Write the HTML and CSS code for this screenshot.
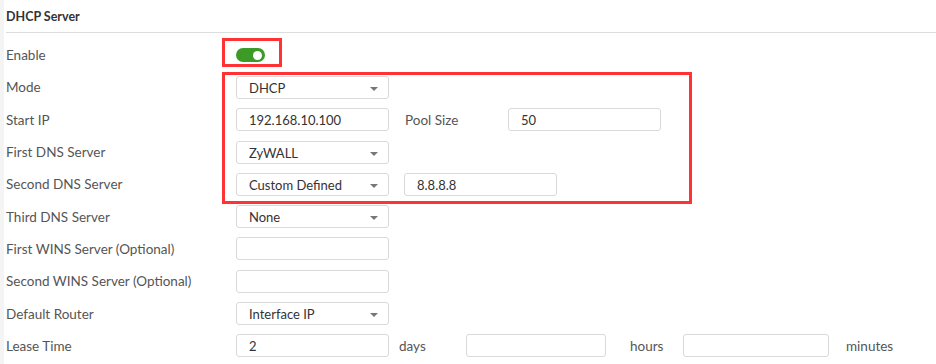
FILE: index.html
```html
<!DOCTYPE html>
<html lang="en">

<head>
    <meta charset="UTF-8">
    <title>DHCP Server</title>
    <link rel="stylesheet" href="styles.css">
</head>

<body>
    <div class="page">
        <div class="title">DHCP Server</div>
        <div class="form">
            <div class="row">
                <div class="label">Enable</div>
                <div class="ctl"><span class="toggle"><span class="knob"></span></span></div>
            </div>
            <div class="row">
                <div class="label">Mode</div>
                <div class="ctl"><div class="box sel">DHCP</div></div>
            </div>
            <div class="row">
                <div class="label">Start IP</div>
                <div class="ctl">
                    <div class="box">192.168.10.100</div>
                    <div class="sub">Pool Size</div>
                    <div class="box">50</div>
                </div>
            </div>
            <div class="row">
                <div class="label">First DNS Server</div>
                <div class="ctl"><div class="box sel">ZyWALL</div></div>
            </div>
            <div class="row">
                <div class="label">Second DNS Server</div>
                <div class="ctl">
                    <div class="box sel">Custom Defined</div>
                    <div class="box ip">8.8.8.8</div>
                </div>
            </div>
            <div class="row">
                <div class="label">Third DNS Server</div>
                <div class="ctl"><div class="box sel">None</div></div>
            </div>
            <div class="row">
                <div class="label">First WINS Server (Optional)</div>
                <div class="ctl"><div class="box"></div></div>
            </div>
            <div class="row">
                <div class="label">Second WINS Server (Optional)</div>
                <div class="ctl"><div class="box"></div></div>
            </div>
            <div class="row">
                <div class="label">Default Router</div>
                <div class="ctl"><div class="box sel">Interface IP</div></div>
            </div>
            <div class="row">
                <div class="label">Lease Time</div>
                <div class="ctl">
                    <div class="box">2</div>
                    <div class="unit">days</div>
                    <div class="box hrs"></div>
                    <div class="unit u2">hours</div>
                    <div class="box mins"></div>
                    <div class="unit u3">minutes</div>
                </div>
            </div>
        </div>

        <!-- annotation frames -->
        <div class="mark m1"></div>
        <div class="mark m2"></div>
    </div>
</body>

</html>
```

FILE: styles.css
```css
body {
    margin: 0;
    padding: 0;
    background: #fff;
    font-family: "Lato", "Liberation Sans", sans-serif;
    font-size: 13.5px;
    color: #555;
}

.page {
    position: relative;
    width: 936px;
    height: 364px;
    overflow: hidden;
    border-left: 4px solid #f4f4f4;
    box-sizing: border-box;
    padding-left: 2px;
}

.title {
    height: 32px;
    line-height: 33px;
    font-weight: bold;
    font-size: 12.5px;
    color: #333;
    border-bottom: 1px solid #dddddd;
}

.form {
    padding-top: 6px;
}

.row {
    display: flex;
    align-items: center;
    height: 32.3px;
}

.label {
    width: 230px;
    flex: none;
}

.ctl {
    display: flex;
    align-items: center;
}

.box {
    position: relative;
    width: 153px;
    height: 23px;
    line-height: 23px;
    box-sizing: border-box;
    border: 1px solid #d9d9d9;
    border-radius: 3px;
    padding-left: 12px;
    color: #333;
    font-size: 13px;
}

.sel::after {
    content: "";
    position: absolute;
    right: 10px;
    top: 10px;
    border-left: 4px solid transparent;
    border-right: 4px solid transparent;
    border-top: 4px solid #777;
}

.sub {
    width: 103px;
    padding-left: 16px;
}

.ip {
    margin-left: 15px;
}

.unit {
    margin-left: 10px;
    width: 67px;
}

.u2 {
    margin-left: 24px;
    width: 53px;
}

.u3 {
    margin-left: 17px;
}

.box.hrs {
    width: 140px;
}

.box.mins {
    width: 146px;
}

.toggle {
    display: inline-block;
    position: relative;
    width: 29px;
    height: 14px;
    border-radius: 7px;
    background: #3b9b26;
}

.knob {
    position: absolute;
    right: 3px;
    top: 2.5px;
    width: 9px;
    height: 9px;
    border-radius: 50%;
    background: #fff;
}

.mark {
    position: absolute;
    border: 3px solid #ff3333;
    box-sizing: border-box;
}

.m1 {
    left: 218px;
    top: 38px;
    width: 60px;
    height: 29px;
}

.m2 {
    left: 218px;
    top: 72px;
    width: 470px;
    height: 132px;
}
```
